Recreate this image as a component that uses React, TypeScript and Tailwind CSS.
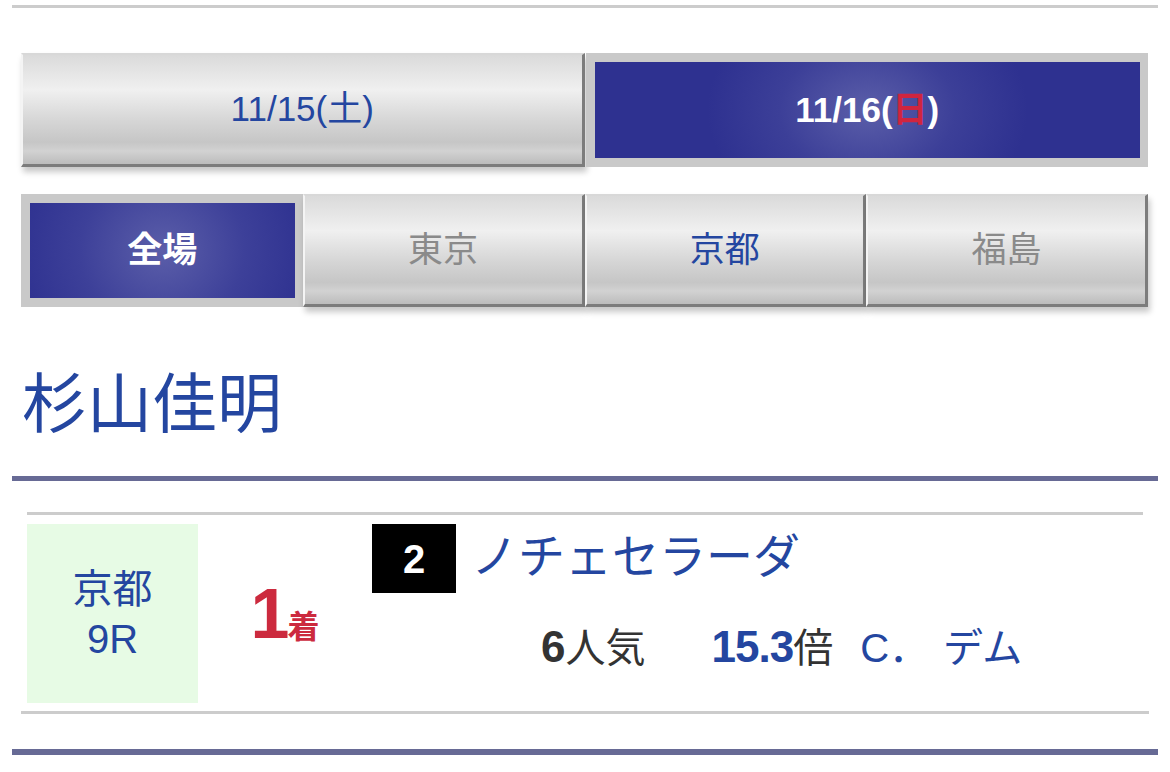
const FONT = '"Liberation Sans", "Noto Sans CJK JP", sans-serif';

const btnOff =
  'flex items-center justify-center border-t-2 border-l-2 border-t-[#d8d8d8] border-l-[#f4f4f4] border-r-[3px] border-b-[3px] border-r-[#7c7c7c] border-b-[#7c7c7c] bg-[linear-gradient(to_bottom,#dadada_0%,#f0f0f0_32%,#d6d6d6_60%,#c6c6c6_80%,#d2d2d2_88%,#bcbcbc_100%)] shadow-[2px_5px_6px_rgba(0,0,0,0.22)]';

function DateTab({ label, day, active }: { label: string; day: string; active?: boolean }) {
  if (active) {
    return (
      <div className="bg-[#c9c9c9] pt-[9px] pb-[9px] pl-[9px] pr-[8px] ml-[1px]">
        <div className="h-full flex items-center justify-center bg-[radial-gradient(ellipse_160px_120px_at_center,#5b5ea9_0%,#3c3f98_55%,#2e3190_100%)] text-white font-bold text-[35px]">
          {label}(<span className="text-[#d0253f]">{day}</span>)
        </div>
      </div>
    );
  }
  return (
    <div className={`${btnOff} text-[35px] text-[#2446a0]`}>
      {label}({day})
    </div>
  );
}

function VenueTab({ name, tone }: { name: string; tone: 'active' | 'blue' | 'gray' }) {
  if (tone === 'active') {
    return (
      <div className="bg-[#c9c9c9] pt-[9px] pb-[9px] pl-[9px] pr-[8px]">
        <div className="h-full flex items-center justify-center bg-[radial-gradient(ellipse_150px_140px_at_center,#5b5ea9_0%,#3d4099_55%,#2e3190_100%)] text-white font-bold text-[35px]">
          {name}
        </div>
      </div>
    );
  }
  return (
    <div className={`${btnOff} text-[35px] ${tone === 'blue' ? 'text-[#2446a0]' : 'text-[#8a8a8a]'}`}>
      {name}
    </div>
  );
}

export default function App() {
  return (
    <div className="w-[1170px] h-[772px] bg-white overflow-hidden" style={{ fontFamily: FONT }}>
      <div className="px-[12px] pt-[5px]">
        <div className="h-[3px] bg-[#cccccc]" />
      </div>

      <div className="pl-[21px] pr-[22px]">
        <div className="mt-[45px] grid grid-cols-2 h-[114px]">
          <DateTab label="11/15" day="土" />
          <DateTab label="11/16" day="日" active />
        </div>

        <div className="mt-[27px] grid grid-cols-4 h-[113px]">
          <VenueTab name="全場" tone="active" />
          <VenueTab name="東京" tone="gray" />
          <VenueTab name="京都" tone="blue" />
          <VenueTab name="福島" tone="gray" />
        </div>
      </div>

      <h1 className="mt-[66px] pl-[22px] text-[65px] leading-[64px] text-[#2446a0]">杉山佳明</h1>

      <div className="px-[12px] mt-[39px]">
        <div className="h-[5px] bg-[#676a95]" />
      </div>

      <div className="mt-[31px] ml-[27px] mr-[27px] h-[3px] bg-[#cccccc]" />

      <div className="mt-[9px] pl-[27px] flex">
        <div className="w-[171px] h-[179px] bg-[#e7fbe5] flex flex-col items-center justify-center text-[40px] leading-[50px] text-[#2446a0]">
          <span>京都</span>
          <span>9R</span>
        </div>

        <div className="w-[174px] flex items-center justify-center">
          <div className="flex items-baseline text-[#cc2a3e] font-bold">
            <span className="text-[70px] leading-none tracking-[-4px]">1</span>
            <span className="text-[32px] leading-none ml-[2px]">着</span>
          </div>
        </div>

        <div className="flex flex-col">
          <div className="flex items-center gap-[15px]">
            <div className="w-[84px] h-[69px] bg-black text-white font-bold text-[40px] flex items-center justify-center">
              2
            </div>
            <span className="text-[47px] leading-none text-[#2446a0] -mt-[4px]">ノチェセラーダ</span>
          </div>
          <div className="mt-[32px] pl-[169px] flex items-baseline text-[40px] leading-none text-[#333333]">
            <span className="font-bold text-[44px]">6</span>
            <span>人気</span>
            <span className="ml-[66px] font-bold text-[44px] tracking-[-1px] text-[#2446a0]">15.3</span>
            <span>倍</span>
            <span className="ml-[27px] text-[#2446a0]">C．</span>
            <span className="ml-[14px] text-[#2446a0]">デム</span>
          </div>
        </div>
      </div>

      <div className="mt-[8px] ml-[21px] mr-[21px] h-[3px] bg-[#cccccc]" />

      <div className="px-[12px] mt-[35px]">
        <div className="h-[6px] bg-[#676a95]" />
      </div>
    </div>
  );
}
